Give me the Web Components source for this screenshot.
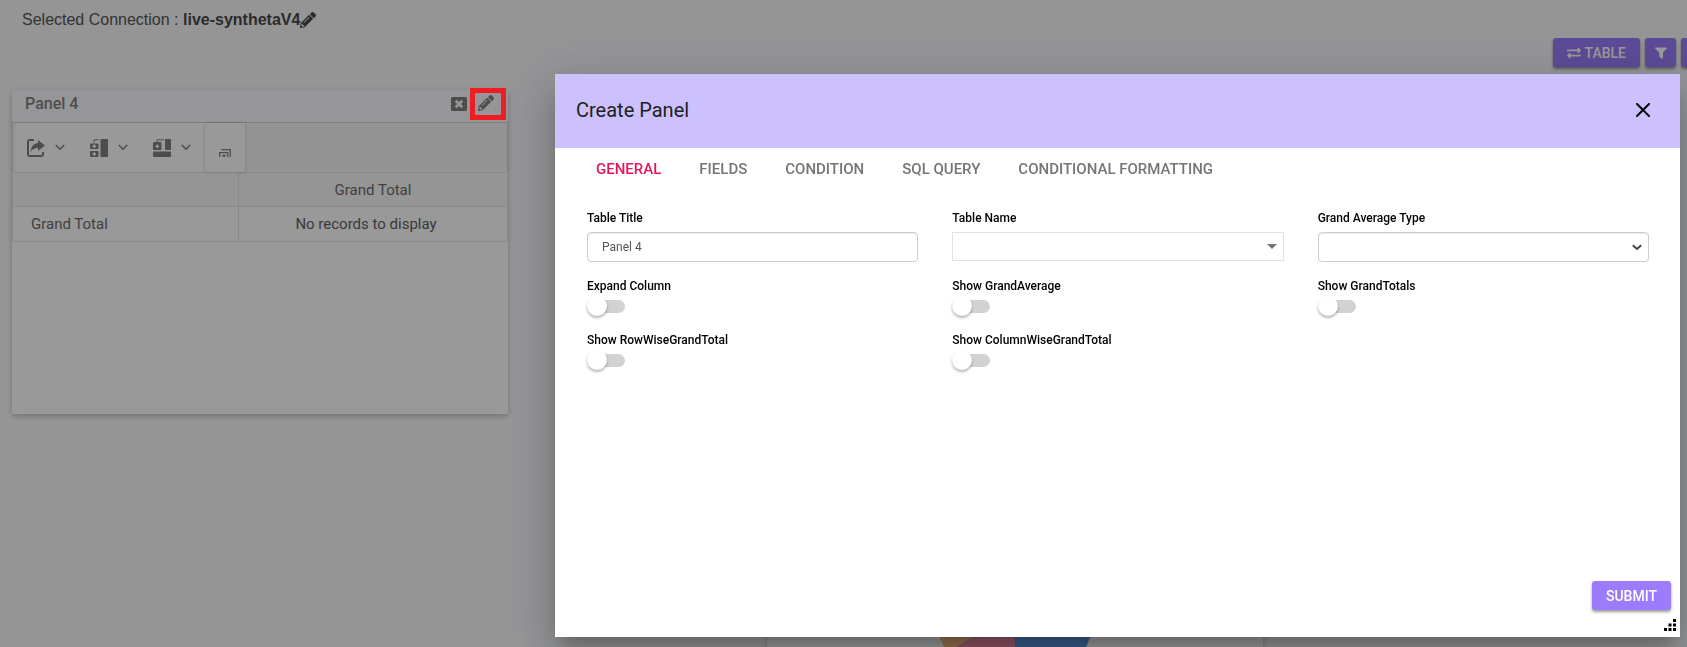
<!DOCTYPE html>
<html lang="en">
<head>
<meta charset="utf-8">
<meta name="viewport" content="width=device-width, initial-scale=1">
<title>Dashboard designer</title>
<style>
  html, body { margin: 0; height: 100%; }
  body { background: #f8f9fb; font-family: Roboto, sans-serif; overflow: hidden; }
</style>
</head>
<body>
<dashboard-page></dashboard-page>
<create-panel-dialog></create-panel-dialog>

<script>
const define = (name, html, setup) => {
  const template = document.createElement('template');
  template.innerHTML = html;
  customElements.define(name, class extends HTMLElement {
    constructor() {
      super();
      this.attachShadow({ mode: 'open' }).append(template.content.cloneNode(true));
    }
    connectedCallback() { if (setup) setup(this, this.shadowRoot); }
  });
};

const icons = {
  pencil: ['0 0 512 512', '<path d="M497.9 142.1l-46.1 46.1c-4.7 4.7-12.3 4.7-17 0l-111-111c-4.7-4.7-4.7-12.3 0-17l46.1-46.1c18.7-18.7 49.1-18.7 67.9 0l60.1 60.1c18.8 18.7 18.8 49.1 0 67.9zM284.2 99.8L21.6 362.4.4 483.9c-2.9 16.4 11.4 30.6 27.8 27.8l121.5-21.3 262.6-262.6c4.7-4.7 4.7-12.3 0-17l-111-111c-4.8-4.7-12.4-4.7-17.1 0zM124.1 339.9c-5.5-5.5-5.5-14.3 0-19.8l154-154c5.5-5.5 14.3-5.5 19.8 0s5.5 14.3 0 19.8l-154 154c-5.5 5.5-14.3 5.5-19.8 0zM88 424h48v36.3l-64.5 11.3-31.1-31.1L51.8 376H88v48z"/>'],
  closeBox: ['0 0 16 16', '<path fill-rule="evenodd" d="M1.500 1h13A1.500 1.500 0 0 1 16 2.500v11a1.500 1.500 0 0 1-1.500 1.500h-13A1.500 1.500 0 0 1 0 13.500v-11A1.500 1.500 0 0 1 1.500 1zM5.800 3.800 3.800 5.800l2.200 2.200-2.200 2.200 2 2 2.200-2.200 2.200 2.200 2-2-2.200-2.200 2.200-2.200-2-2-2.200 2.200z"/>'],
  exchange: ['0 0 512 512', '<path d="M0 168v-16c0-13.255 10.745-24 24-24h360V80c0-21.367 25.899-32.042 40.971-16.971l80 80c9.372 9.373 9.372 24.569 0 33.941l-80 80C409.956 271.982 384 261.456 384 240v-48H24c-13.255 0-24-10.745-24-24zm488 152H128v-48c0-21.314-25.862-32.080-40.971-16.971l-80 80c-9.372 9.373-9.372 24.569 0 33.941l80 80C102.057 463.997 128 453.437 128 432v-48h360c13.255 0 24-10.745 24-24v-16c0-13.255-10.745-24-24-24z"/>'],
  filter: ['0 0 14 14', '<path d="M1.600 1.500h10.800c.6 0 .8.600.4 1L9 6.500v5.800c0 .5-.5.700-.9.400L5.600 11a1 1 0 0 1-.4-.8V6.500l-4-4c-.4-.4-.2-1 .4-1z"/>'],
  share: ['0 0 18 18', '<path d="M7 1H3a2 2 0 0 0-2 2v12a2 2 0 0 0 2 2h11a2 2 0 0 0 2-2v-2" fill="none" stroke="currentColor" stroke-width="2"/><path d="M11 1l7 5.500L11 12V9C7.500 9 5.500 10 3.500 13 4 8 6.500 4.500 11 4z"/>'],
  chevron: ['0 0 10 7', '<path d="M.8 1 5 5.200 9.200 1" fill="none" stroke="currentColor" stroke-width="1.600"/>'],
  subtotal: ['0 0 18 18', '<rect x="10.500" width="7.500" height="18" rx="1"/><path fill-rule="evenodd" d="M1 4.500h6.500a1 1 0 0 1 1 1V9a1 1 0 0 1-1 1H1a1 1 0 0 1-1-1V5.500a1 1 0 0 1 1-1zM3.500 5.500v1h-1v1.500h1v1H5V8h1V6.500H5v-1zM1 12h6.500a1 1 0 0 1 1 1v4a1 1 0 0 1-1 1H1a1 1 0 0 1-1-1v-4a1 1 0 0 1 1-1zm2.500 1.300v1h-1v1.500h1v1H5v-1h1v-1.500H5v-1z"/><path d="M4 3.500V.800h4.800" fill="none" stroke="currentColor"/>'],
  grandtotal: ['0 0 18 18', '<rect y="12.500" width="18" height="5.500" rx="1"/><rect x="12" width="6" height="11" rx="1"/><path fill-rule="evenodd" d="M1 3h6.500a1 1 0 0 1 1 1v6a1 1 0 0 1-1 1H1a1 1 0 0 1-1-1V4a1 1 0 0 1 1-1zm2.500 2.500v1h-1V8h1v1H5V8h1V6.500H5v-1z"/><path d="M4 3V.800h7" fill="none" stroke="currentColor"/>'],
  stack: ['0 0 12 8', '<path d="M.7 8V3.700h8V8M2.500.700h8.800V8M5 8V6M3.300 6.500h3.400" fill="none" stroke="currentColor" stroke-width="1.300"/>'],
  close: ['0 0 14 14', '<path d="M1 1l12 12M13 1 1 13" fill="none" stroke="currentColor" stroke-width="2" stroke-linecap="round"/>'],
  grip: ['0 0 12 12', '<path d="M9 0h3v3H9zM4.500 4.500h3v3h-3zM9 4.500h3v3H9zM0 9h3v3H0zM4.500 9h3v3h-3zM9 9h3v3H9z"/>'],
  caret: ['0 0 10 5', '<path d="M0 0h10L5 5z"/>'],
  arrow: ['0 0 10 7', '<path d="M.8 1.200 5 5 9.200 1.200" fill="none" stroke="currentColor" stroke-width="2"/>']
};

define('ui-icon', `
<style>
  :host { display: inline-flex; flex: none; width: 16px; height: 16px; }
  svg { width: 100%; height: 100%; fill: currentColor; }
</style>
<svg aria-hidden="true"></svg>`, (host, root) => {
  const [box, body] = icons[host.getAttribute('name')];
  const svg = root.querySelector('svg');
  svg.setAttribute('viewBox', box);
  svg.innerHTML = body;
});

define('raised-button', `
<style>
  :host { display: block; }
  button { display: flex; align-items: center; justify-content: center; gap: 4px; box-sizing: border-box; width: 100%;
    height: 29px; padding: 0 14px; border: 0; border-radius: 3px; background: #9c7cfc; color: #fff;
    font: 500 14px/20px Roboto, sans-serif; white-space: nowrap; box-shadow: 0 2px 3px rgba(0,0,0,.4); }
  :host([compact]) button { width: 31px; padding: 0; }
</style>
<button type="button"><slot></slot></button>`, (host, root) => {
  const label = host.getAttribute('label');
  if (label) root.querySelector('button').setAttribute('aria-label', label);
});

define('dashboard-card', `
<style>
  :host { display: block; box-sizing: border-box; background: #fff; box-shadow: 0 3px 4px rgba(0,0,0,.12), 0 1px 8px rgba(0,0,0,.12); }
</style>
<slot></slot>`);

define('pivot-toolbar', `
<style>
  :host { display: flex; box-sizing: border-box; height: 49px; padding-left: 3px; background: #f7f7f7;
    border: 1px solid #d0d0d0; border-width: 0 1px; color: #808080; }
  .group { display: flex; background: #fff; }
  button { display: flex; align-items: center; gap: 10px; padding: 0 10px 0 11px; width: 63px; box-sizing: border-box; border: 0; background: none; color: inherit; }
  button.last { width: 40px; padding: 10px 0 0; justify-content: center; background: #fff; box-shadow: 0 0 3px rgba(0,0,0,.2); }
  .glyph { width: 18px; height: 18px; }
  .chev { width: 10px; height: 7px; }
  .stack { width: 12px; height: 8px; }
</style>
<div class="group">
  <button type="button" aria-label="Export"><ui-icon class="glyph" name="share"></ui-icon><ui-icon class="chev" name="chevron"></ui-icon></button>
  <button type="button" aria-label="Sub totals"><ui-icon class="glyph" name="subtotal"></ui-icon><ui-icon class="chev" name="chevron"></ui-icon></button>
  <button type="button" aria-label="Grand totals"><ui-icon class="glyph" name="grandtotal"></ui-icon><ui-icon class="chev" name="chevron"></ui-icon></button>
</div>
<button type="button" class="last" aria-label="Formatting"><ui-icon class="stack" name="stack"></ui-icon></button>`);

define('pivot-table', `
<style>
  :host { display: block; }
  table { width: 100%; border-collapse: collapse; table-layout: fixed; color: #6c6c6c; font-size: 15px; line-height: 20px; }
  col:first-child { width: 226px; }
  th, td { box-sizing: border-box; height: 34px; padding: 0; border: 1px solid #e4e4e4; font-weight: 400; text-align: center; }
  thead th { background: #f8f8f8; }
  tbody th { padding-left: 18px; text-align: left; }
  td { color: #606060; padding-right: 14px; }
  tbody th, tbody td { height: 35px; }
</style>
<table>
  <colgroup><col><col></colgroup>
  <thead><tr><th></th><th scope="col">Grand Total</th></tr></thead>
  <tbody><tr><th scope="row">Grand Total</th><td>No records to display</td></tr></tbody>
</table>`);

define('pivot-panel', `
<style>
  :host { display: block; }
  dashboard-card { height: 324px; }
  header { display: flex; align-items: flex-start; box-sizing: border-box; height: 33px; padding: 2px 2px 0 13px;
    background: #fbfafd; border-bottom: 1px solid #d0d0d0; }
  h2 { flex: 1; margin: 0; color: #808080; font-size: 16px; font-weight: 500; line-height: 24px; }
  button { display: flex; border: 0; padding: 4px 0 0; background: none; color: #808080; }
  .edit { position: relative; padding: 3px 12px 0 11px; }
  .edit::after { content: ""; position: absolute; z-index: 20; inset: -4px 0 auto 3px; box-sizing: border-box; height: 32px; border: 5px solid #ee1c25; }
</style>
<dashboard-card>
  <header>
    <h2>Panel 4</h2>
    <button type="button" aria-label="Remove panel"><ui-icon name="closeBox"></ui-icon></button>
    <button type="button" class="edit" aria-label="Edit panel"><ui-icon name="pencil"></ui-icon></button>
  </header>
  <pivot-toolbar></pivot-toolbar>
  <pivot-table></pivot-table>
</dashboard-card>`);

define('pie-chart', `
<style>
  :host { display: grid; place-items: center; height: 100%; }
  svg { width: 160px; height: 160px; }
</style>
<svg viewBox="-80 -80 160 160" role="img" aria-label="Pie chart">
  <path fill="#5c9be8" d="M0 0V-80A80 80 0 0 1 0 80z"/>
  <path fill="#f08aa8" d="M0 0V80A80 80 0 0 1-68 42z"/>
  <path fill="#f8bd82" d="M0 0-68 42A80 80 0 0 1 0-80z"/>
</svg>`);

define('dashboard-page', `
<style>
  :host { display: flex; flex-direction: column; height: 100%; overflow: hidden; }
  .connection { flex: none; display: flex; align-items: center; height: 38px; padding: 2px 22px 0; box-sizing: border-box;
    color: #555; font: 16px/20px "Liberation Sans", Arial, sans-serif; }
  p { margin: 0; }
  b { color: #484848; }
  .connection button { display: flex; padding: 0; border: 0; background: none; color: #484848; }
  .actions { flex: none; display: flex; justify-content: flex-end; gap: 5px; height: 52px; margin-right: -25px; }
  .small { width: 14px; height: 14px; }
  .board { flex: none; display: flex; align-items: flex-start; gap: 259px; padding: 0 12px; }
  pivot-panel { flex: 0 0 496px; }
  .chart { flex: 0 0 496px; height: 360px; margin-top: 340px; }
</style>
<div class="connection"><p>Selected Connection : <b>live-synthetaV4</b></p><button type="button" aria-label="Change connection"><ui-icon name="pencil"></ui-icon></button></div>
<div class="actions">
  <raised-button><ui-icon class="small" name="exchange"></ui-icon>TABLE</raised-button>
  <raised-button compact label="Filter"><ui-icon class="small" name="filter"></ui-icon></raised-button>
  <raised-button compact label="More"></raised-button>
</div>
<main class="board">
  <pivot-panel></pivot-panel>
  <dashboard-card class="chart"><pie-chart></pie-chart></dashboard-card>
</main>`);

const fieldStyle = `
  :host { display: block; }
  label { display: block; color: #000; font-size: 12px; font-weight: 500; line-height: 18px; }
`;

define('text-field', `
<style>${fieldStyle}
  input { display: block; box-sizing: border-box; width: 100%; height: 30px; margin-top: 5px; padding: 0 14px; border: 1px solid #ccc;
    border-radius: 4px; color: #555; background: #fff; font: 12px/18px Roboto, sans-serif; box-shadow: inset 0 1px 1px rgba(0,0,0,.08); }
</style>
<label for="control"></label><input id="control" type="text">`, (host, root) => {
  root.querySelector('label').textContent = host.getAttribute('label');
  root.querySelector('input').value = host.getAttribute('value') || '';
});

define('select-field', `
<style>${fieldStyle}
  .box { display: grid; align-items: center; margin-top: 5px; }
  select, ui-icon { grid-area: 1 / 1; }
  select { appearance: none; box-sizing: border-box; width: 100%; height: 30px; padding: 0 14px; border: 1px solid #ccc;
    border-radius: 4px; background: #fff; font: 12px/18px Roboto, sans-serif; box-shadow: inset 0 1px 1px rgba(0,0,0,.08); }
  ui-icon { justify-self: end; margin-right: 7px; width: 10px; height: 7px; color: #444; pointer-events: none; }
  :host([plain]) select { height: 29px; border-color: #e2e0e0; border-radius: 0; box-shadow: none; }
  :host([plain]) ui-icon { height: 5px; color: #757575; }
</style>
<label for="control"></label><div class="box"><select id="control"><option></option></select></div>`, (host, root) => {
  root.querySelector('label').textContent = host.getAttribute('label');
  const icon = document.createElement('ui-icon');
  icon.setAttribute('name', host.hasAttribute('plain') ? 'caret' : 'arrow');
  root.querySelector('.box').append(icon);
});

define('switch-field', `
<style>${fieldStyle}
  input { appearance: none; display: grid; align-items: center; width: 38px; height: 20px; margin: 1px 0 0; }
  input::before, input::after { content: ""; grid-area: 1 / 1; }
  input::before { height: 13px; border-radius: 7px; background: #d2d2d2; }
  input::after { width: 20px; height: 20px; border-radius: 50%; background: #fff; box-shadow: 0 2px 3px rgba(0,0,0,.3); }
  input:checked::after { justify-self: end; }
</style>
<label for="control"></label><input id="control" type="checkbox" role="switch">`, (host, root) => {
  root.querySelector('label').textContent = host.getAttribute('label');
});

define('tab-strip', `
<style>
  :host { display: flex; padding: 0 22px; }
  button { padding: 0 19px; height: 41px; border: 0; background: none; color: #757575; font: 500 15px/20px Roboto, sans-serif; text-transform: uppercase; white-space: nowrap; }
  button[aria-selected="true"] { color: #e3165b; }
</style>`, (host, root) => {
  host.setAttribute('role', 'tablist');
  host.getAttribute('tabs').split('|').forEach((text, i) => {
    const tab = document.createElement('button');
    tab.type = 'button';
    tab.setAttribute('role', 'tab');
    tab.setAttribute('aria-selected', String(i === 0));
    tab.textContent = text;
    root.append(tab);
  });
});

define('create-panel-dialog', `
<style>
  :host { position: fixed; inset: 0; z-index: 10; display: flex; box-sizing: border-box; padding: 74px 7px 10px 555px; background: rgba(0,0,0,.4); }
  section { flex: 1; display: flex; flex-direction: column; background: #fff;
    box-shadow: 0 11px 15px -7px rgba(0,0,0,.2), 0 24px 38px 3px rgba(0,0,0,.14), 0 9px 46px 8px rgba(0,0,0,.12); }
  header { display: flex; align-items: center; justify-content: space-between; box-sizing: border-box; height: 74px; padding: 0 30px 2px 21px; background: #cdc0ff; }
  h1 { margin: 0; color: #212121; font-size: 20px; font-weight: 400; line-height: 28px; }
  .close { display: flex; padding: 0; border: 0; background: none; color: #000; }
  .close ui-icon { width: 14px; height: 14px; }
  form { flex: 1; display: grid; grid-template-columns: repeat(3, 1fr); grid-template-rows: 68px 54px 54px; gap: 0 34px; padding: 20px 31px 0 32px; }
  footer { display: flex; flex-direction: column; align-items: flex-end; gap: 9px; padding: 0 4px 6px; }
  raised-button { margin-right: 5px; width: 79px; }
  .grip { width: 12px; height: 12px; }
</style>
<section role="dialog" aria-labelledby="title">
  <header><h1 id="title">Create Panel</h1><button type="button" class="close" aria-label="Close"><ui-icon name="close"></ui-icon></button></header>
  <tab-strip tabs="General|Fields|Condition|SQL Query|Conditional Formatting"></tab-strip>
  <form>
    <text-field label="Table Title" value="Panel 4"></text-field>
    <select-field plain label="Table Name"></select-field>
    <select-field label="Grand Average Type"></select-field>
    <switch-field label="Expand Column"></switch-field>
    <switch-field label="Show GrandAverage"></switch-field>
    <switch-field label="Show GrandTotals"></switch-field>
    <switch-field label="Show RowWiseGrandTotal"></switch-field>
    <switch-field label="Show ColumnWiseGrandTotal"></switch-field>
  </form>
  <footer><raised-button>SUBMIT</raised-button><ui-icon class="grip" name="grip"></ui-icon></footer>
</section>`);
</script>
</body>
</html>
